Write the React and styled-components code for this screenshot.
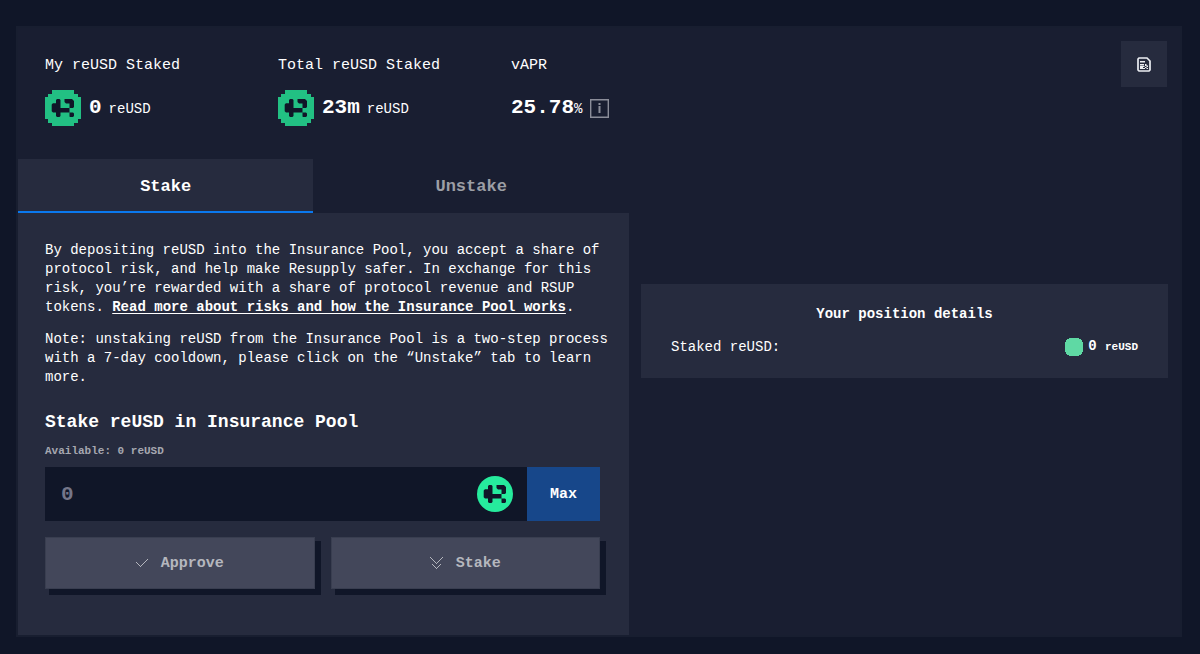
import React from 'react'
import { useState } from 'react'
import styled, { createGlobalStyle } from 'styled-components'

const GlobalStyle = createGlobalStyle`
  * {
    box-sizing: border-box;
  }
  body {
    margin: 0;
    background-color: #101628;
    color: #fff;
    font-family: 'Liberation Mono', monospace;
    font-size: 14px;
    line-height: 19px;
  }
  button, input {
    font-family: inherit;
    margin: 0;
    border: 0;
    border-radius: 0;
  }
  h1, h2, p, dl, dd {
    margin: 0;
  }
`

// pixel mark shared by the octagon and the round coin
const MarkPath = () => (
  <path fill="#101628" d="M11 10l1-1h2.500l1 1V18h9v-4.500H21l-1.500-1.500V9h7.500l2 2v6l-1 1h-3.500v4.500h-9V26l-1 1H12l-1-1v-3.500H8l-1.300-1.300V14.500l1.200-1.200H11zM24.500 22.500H28l1 1V26l-1 1h-3l-.5-.5z" />
)

const ReusdIcon = () => (
  <svg width="36" height="36" viewBox="0 0 36 36" aria-hidden="true">
    <path fill="#22c083" d="M7 0h22v4h4v3h3v22h-3v4h-4v3H7v-3H3v-4H0V7h3V4h4z" />
    <MarkPath />
  </svg>
)

const CoinIcon = () => (
  <svg width="36" height="36" viewBox="0 0 36 36" aria-hidden="true">
    <circle cx="18" cy="18" r="18" fill="#26eb9d" />
    <MarkPath />
  </svg>
)

const DotIcon = () => (
  <svg width="18" height="18" viewBox="0 0 18 18" aria-hidden="true">
    <path fill="#5fd9a4" d="M4 0h10v1h2v1h1v2h1v10h-1v2h-1v1h-2v1H4v-1H2v-1H1v-2H0V4h1V2h1V1h2z" />
  </svg>
)

const InfoIcon = () => (
  <svg width="19" height="19" viewBox="0 0 19 19" aria-hidden="true">
    <path fill="none" stroke="#8b8d99" strokeWidth="1.400" d="M.7.7h17.600v17.600H.7z" />
    <path fill="#8b8d99" d="M8.500 4h2v2h-2zM8.500 7h2v7h-2z" />
  </svg>
)

const ContractIcon = () => (
  <svg width="14" height="15" viewBox="0 0 14 15" aria-hidden="true">
    <path fill="none" stroke="#eceef2" strokeWidth="1.700" d="M2 1h8l3 3v9l-1 1H2l-1-1V2z" />
    <path fill="#eceef2" d="M3 4h5v1.500H3zM3 7h4v1.500H3zM3 9h3v3H3zM6 9h1.500v1H6zM8 7h1.500v2H8zM9.500 8.500H11V10H9.500zM8 10h1.500v1H8zM9.500 11H11v1H9.500zM5.500 11H8v1H5.500z" />
  </svg>
)

const CheckIcon = () => (
  <svg width="12" height="10" viewBox="0 0 12 10" shapeRendering="crispEdges" aria-hidden="true">
    <path fill="#b5b7be" d="M0 4h1v1H0zM1 5h1v1H1zM2 6h1v1H2zM3 7h1v1H3zM4 8h1v1H4zM5 7h1v1H5zM6 6h1v1H6zM7 5h1v1H7zM8 4h1v1H8zM9 3h1v1H9zM10 2h1v1h-1zM11 1h1v1h-1z" />
  </svg>
)

const ChevronsIcon = () => (
  <svg width="13" height="13" viewBox="0 0 13 13" shapeRendering="crispEdges" aria-hidden="true">
    <path fill="#b5b7be" d="M0 0h1v1H0zM1 1h1v1H1zM2 2h1v1H2zM3 3h1v1H3zM4 4h1v1H4zM5 5h1v1H5zM6 6h1v1H6zM7 5h1v1H7zM8 4h1v1H8zM9 3h1v1H9zM10 2h1v1h-1zM11 1h1v1h-1zM12 0h1v1h-1zM2 7h1v1H2zM3 8h1v1H3zM4 9h1v1H4zM5 10h1v1H5zM6 11h1v1H6zM7 10h1v1H7zM8 9h1v1H8zM9 8h1v1H9zM10 7h1v1h-1z" />
  </svg>
)

function App() {
  const [tab, setTab] = useState('stake')
  const [amount, setAmount] = useState('')
  return (
    <>
      <GlobalStyle />
      <Card>
        <Header>
          <Stats>
            <Stat>
              <StatLabel>My reUSD Staked</StatLabel>
              <StatValue>
                <ReusdIcon />
                <Amount $gap="7px"><b>0</b><Unit>reUSD</Unit></Amount>
              </StatValue>
            </Stat>
            <Stat>
              <StatLabel>Total reUSD Staked</StatLabel>
              <StatValue>
                <ReusdIcon />
                <Amount $gap="7px"><b>23m</b><Unit>reUSD</Unit></Amount>
              </StatValue>
            </Stat>
            <Stat>
              <StatLabel>vAPR</StatLabel>
              <StatValue>
                <Amount><b>25.78</b><Unit>%</Unit></Amount>
                <InfoIcon />
              </StatValue>
            </Stat>
          </Stats>
          <ContractButton type="button" aria-label="Contracts">
            <ContractIcon />
          </ContractButton>
        </Header>
        <Columns>
          <section>
            <Tabs role="tablist">
              <Tab type="button" role="tab" aria-selected={tab === 'stake'} $active={tab === 'stake'} onClick={() => setTab('stake')}>Stake</Tab>
              <Tab type="button" role="tab" aria-selected={tab === 'unstake'} $active={tab === 'unstake'} onClick={() => setTab('unstake')}>Unstake</Tab>
            </Tabs>
            <Panel>
              <Copy>
                <p>
                  By depositing reUSD into the Insurance Pool, you accept a share of protocol risk, and help make Resupply safer. In exchange for this risk, you’re rewarded with a share of protocol revenue and RSUP tokens. <a href="#risks">Read more about risks and how the Insurance Pool works</a>.
                </p>
                <p>
                  Note: unstaking reUSD from the Insurance Pool is a two-step process with a 7-day cooldown, please click on the “Unstake” tab to learn more.
                </p>
              </Copy>
              <Title>Stake reUSD in Insurance Pool</Title>
              <Available htmlFor="amount">Available: 0 reUSD</Available>
              <Field>
                <AmountInput id="amount" placeholder="0" inputMode="decimal" value={amount} onChange={(e) => setAmount(e.target.value)} />
                <CoinIcon />
                <MaxButton type="button" onClick={() => setAmount('0')}>Max</MaxButton>
              </Field>
              <Actions>
                <ActionButton type="button" disabled><CheckIcon />Approve</ActionButton>
                <ActionButton type="button" disabled><ChevronsIcon />Stake</ActionButton>
              </Actions>
            </Panel>
          </section>
          <Details>
            <DetailsTitle>Your position details</DetailsTitle>
            <DetailsRow>
              <dt>Staked reUSD:</dt>
              <DetailsValue>
                <DotIcon />
                <span>0 <small>reUSD</small></span>
              </DetailsValue>
            </DetailsRow>
          </Details>
        </Columns>
      </Card>
    </>
  )
}

export default App

const Card = styled.main`
  margin: 26px 18px 16px 16px;
  border: 2px solid #181e30;
  background-color: #191e31;
`
const Header = styled.header`
  display: flex;
  align-items: flex-start;
  justify-content: space-between;
  padding: 13px 13px 0 27px;
`
const Stats = styled.div`
  flex: 1;
  display: grid;
  grid-template-columns: repeat(3, minmax(0, 233px));
  padding: 15px 0 33px;
`
const Stat = styled.div`
  white-space: nowrap;
`
const StatLabel = styled.div`
  font-size: 15px;
  line-height: 19px;
`
const StatValue = styled.div`
  display: flex;
  align-items: center;
  gap: 8px;
  height: 36px;
  margin-top: 15px;
`
const Amount = styled.span`
  display: flex;
  align-items: baseline;
  gap: ${(props) => props.$gap || '0'};
  font-size: 21px;
  line-height: 24px;
`
const Unit = styled.span`
  font-size: 14px;
`
const ContractButton = styled.button`
  display: flex;
  align-items: center;
  justify-content: center;
  width: 46px;
  height: 46px;
  padding: 0;
  background-color: #262b3e;
  cursor: pointer;
`
const Columns = styled.div`
  display: grid;
  grid-template-columns: 611fr 551fr;
  align-items: start;
`
const Tabs = styled.div`
  display: flex;
`
const Tab = styled.button`
  flex: 1 1 auto;
  height: 54px;
  padding: 2px 0 0;
  font-size: 17px;
  font-weight: bold;
  color: ${(props) => (props.$active ? '#fff' : '#9c9ea5')};
  background-color: ${(props) => (props.$active ? '#262b3e' : 'transparent')};
  border-bottom: 2px solid ${(props) => (props.$active ? '#0a78ee' : 'transparent')};
  cursor: pointer;
`
const Panel = styled.div`
  padding: 28px 29px 46px 27px;
  background-color: #262b3e;
`
const Copy = styled.div`
  display: grid;
  gap: 13px;
  margin-right: -16px;
  a {
    color: inherit;
    font-weight: bold;
    text-underline-offset: 2px;
  }
`
const Title = styled.h2`
  margin-top: 23px;
  font-size: 18px;
  line-height: 24px;
`
const Available = styled.label`
  display: block;
  margin: 8px 0 6px;
  font-size: 11px;
  font-weight: bold;
  color: #a5a7b0;
`
const Field = styled.div`
  display: flex;
  align-items: center;
  height: 54px;
  background-color: #101628;
`
const AmountInput = styled.input`
  flex: 1;
  min-width: 0;
  height: 100%;
  padding: 0 16px;
  font-size: 21px;
  font-weight: bold;
  color: #fff;
  background: transparent;
  outline: none;
  &::placeholder {
    color: #75768a;
    opacity: 1;
  }
`
const MaxButton = styled.button`
  width: 73px;
  height: 100%;
  margin-left: 14px;
  padding: 0;
  font-size: 15px;
  font-weight: bold;
  color: #fff;
  background-color: #17478a;
  cursor: pointer;
`
const Actions = styled.div`
  display: grid;
  grid-template-columns: 1fr 1fr;
  gap: 16px;
  margin-top: 16px;
`
const ActionButton = styled.button`
  display: flex;
  align-items: center;
  justify-content: center;
  gap: 13px;
  height: 52px;
  font-size: 15px;
  font-weight: bold;
  color: #b5b7be;
  background-color: #43475a;
  border: 1px solid #393e50;
  box-shadow: 5px 5px 0 1px #101628;
`
const Details = styled.aside`
  margin: 125px 12px 0;
  padding: 21px 30px;
  background-color: #262b3e;
`
const DetailsTitle = styled.h2`
  font-size: 14px;
  line-height: 19px;
  text-align: center;
`
const DetailsRow = styled.dl`
  display: flex;
  align-items: center;
  justify-content: space-between;
  margin-top: 13px;
`
const DetailsValue = styled.dd`
  display: flex;
  align-items: center;
  gap: 5px;
  font-weight: bold;
  small {
    font-size: 11px;
  }
`
